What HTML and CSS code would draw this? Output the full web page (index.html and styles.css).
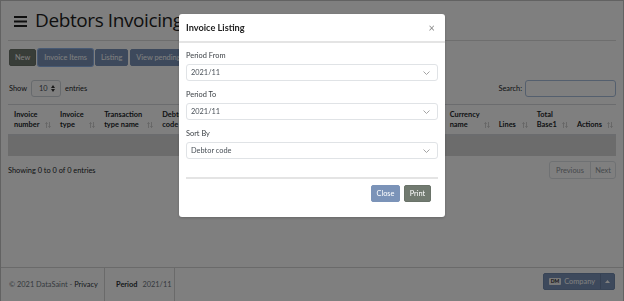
FILE: index.html
```html
<!DOCTYPE html>
<html lang="en">
<head>
<meta charset="utf-8">
<title>Debtors Invoicing</title>
<link rel="stylesheet" href="styles.css">
</head>
<body>
<div class="page">
  <main class="main">
    <div class="page-head">
      <svg class="burger" width="13" height="11" viewBox="0 0 13 11" aria-hidden="true"><rect x="0" y="0" width="13" height="2"/><rect x="0" y="4.5" width="13" height="2"/><rect x="0" y="9" width="13" height="2"/></svg>
      <h1 class="title">Debtors Invoicing</h1>
    </div>
    <div class="toolbar">
      <button class="btn btn-gray">New</button>
      <button class="btn btn-blue btn-focus">Invoice Items</button>
      <button class="btn btn-blue">Listing</button>
      <button class="btn btn-blue">View pending</button>
    </div>
    <div class="dt-top">
      <div class="dt-length">Show <span class="mini-select"><span>10</span><svg width="4" height="7" viewBox="0 0 4 7"><path d="M0 3 L2 0 L4 3Z M0 4 L2 7 L4 4Z" fill="#333"/></svg></span> entries</div>
      <div class="dt-search">Search: <span class="search-box"></span></div>
    </div>
    <table class="grid">
      <colgroup>
        <col class="w46"><col class="w44"><col class="w58"><col class="w80"><col class="w80b"><col class="w60"><col class="w67"><col class="w49"><col class="w38"><col class="w40"><col class="w45">
      </colgroup>
      <thead>
        <tr>
          <th>Invoice<br>number<svg class="sort" width="6" height="6" viewBox="0 0 6 6"><path d="M1.5 6V0.6M0.3 1.8L1.5 0.5L2.7 1.8M4.5 0V5.4M3.3 4.2L4.5 5.5L5.7 4.2" fill="none" stroke="#c4c4c4" stroke-width="0.8"/></svg></th>
          <th>Invoice<br>type<svg class="sort" width="6" height="6" viewBox="0 0 6 6"><path d="M1.5 6V0.6M0.3 1.8L1.5 0.5L2.7 1.8M4.5 0V5.4M3.3 4.2L4.5 5.5L5.7 4.2" fill="none" stroke="#c4c4c4" stroke-width="0.8"/></svg></th>
          <th>Transaction<br>type name<svg class="sort" width="6" height="6" viewBox="0 0 6 6"><path d="M1.5 6V0.6M0.3 1.8L1.5 0.5L2.7 1.8M4.5 0V5.4M3.3 4.2L4.5 5.5L5.7 4.2" fill="none" stroke="#c4c4c4" stroke-width="0.8"/></svg></th>
          <th>Debtor<br>code<svg class="sort" width="6" height="6" viewBox="0 0 6 6"><path d="M1.5 6V0.6M0.3 1.8L1.5 0.5L2.7 1.8M4.5 0V5.4M3.3 4.2L4.5 5.5L5.7 4.2" fill="none" stroke="#c4c4c4" stroke-width="0.8"/></svg></th>
          <th>Debtor<br>name<svg class="sort" width="6" height="6" viewBox="0 0 6 6"><path d="M1.5 6V0.6M0.3 1.8L1.5 0.5L2.7 1.8M4.5 0V5.4M3.3 4.2L4.5 5.5L5.7 4.2" fill="none" stroke="#c4c4c4" stroke-width="0.8"/></svg></th>
          <th>Invoice<br>date<svg class="sort" width="6" height="6" viewBox="0 0 6 6"><path d="M1.5 6V0.6M0.3 1.8L1.5 0.5L2.7 1.8M4.5 0V5.4M3.3 4.2L4.5 5.5L5.7 4.2" fill="none" stroke="#c4c4c4" stroke-width="0.8"/></svg></th>
          <th>Total<br>amount<svg class="sort" width="6" height="6" viewBox="0 0 6 6"><path d="M1.5 6V0.6M0.3 1.8L1.5 0.5L2.7 1.8M4.5 0V5.4M3.3 4.2L4.5 5.5L5.7 4.2" fill="none" stroke="#c4c4c4" stroke-width="0.8"/></svg></th>
          <th>Currency<br>name<svg class="sort" width="6" height="6" viewBox="0 0 6 6"><path d="M1.5 6V0.6M0.3 1.8L1.5 0.5L2.7 1.8M4.5 0V5.4M3.3 4.2L4.5 5.5L5.7 4.2" fill="none" stroke="#c4c4c4" stroke-width="0.8"/></svg></th>
          <th>Lines<svg class="sort" width="6" height="6" viewBox="0 0 6 6"><path d="M1.5 6V0.6M0.3 1.8L1.5 0.5L2.7 1.8M4.5 0V5.4M3.3 4.2L4.5 5.5L5.7 4.2" fill="none" stroke="#c4c4c4" stroke-width="0.8"/></svg></th>
          <th>Total<br>Base1<svg class="sort" width="6" height="6" viewBox="0 0 6 6"><path d="M1.5 6V0.6M0.3 1.8L1.5 0.5L2.7 1.8M4.5 0V5.4M3.3 4.2L4.5 5.5L5.7 4.2" fill="none" stroke="#c4c4c4" stroke-width="0.8"/></svg></th>
          <th>Actions<svg class="sort" width="6" height="6" viewBox="0 0 6 6"><path d="M1.5 6V0.6M0.3 1.8L1.5 0.5L2.7 1.8M4.5 0V5.4M3.3 4.2L4.5 5.5L5.7 4.2" fill="none" stroke="#c4c4c4" stroke-width="0.8"/></svg></th>
        </tr>
      </thead>
      <tbody>
        <tr class="empty"><td colspan="11"></td></tr>
      </tbody>
    </table>
    <div class="dt-bottom">
      <div class="dt-info">Showing 0 to 0 of 0 entries</div>
      <div class="pager"><span class="pg prev">Previous</span><span class="pg next">Next</span></div>
    </div>
  </main>
  <footer class="foot">
    <div class="foot-cell copy">© 2021 DataSaint -&nbsp;<a class="priv">Privacy</a></div>
    <div class="foot-cell period"><b>Period</b> <span class="pval">2021/11</span></div>
    <div class="company">
      <span class="company-main"><span class="dm">DM</span>Company</span>
      <span class="company-caret"><svg width="5" height="3" viewBox="0 0 5 3"><path d="M0 3 L2.5 0 L5 3Z" fill="#fff"/></svg></span>
    </div>
  </footer>
</div>

<div class="backdrop"></div>
<div class="modal-wrap">
  <div class="modal">
    <div class="modal-head">
      <h2 class="modal-title">Invoice Listing</h2>
      <span class="modal-x">×</span>
    </div>
    <div class="modal-body">
      <div class="field">
        <label class="lbl">Period From</label>
        <div class="sel"><span>2021/11</span><svg width="7" height="4" viewBox="0 0 7 4"><path d="M0.5 0.5 L3.5 3.5 L6.5 0.5" fill="none" stroke="#9a9a9a" stroke-width="0.9"/></svg></div>
      </div>
      <div class="field">
        <label class="lbl">Period To</label>
        <div class="sel"><span>2021/11</span><svg width="7" height="4" viewBox="0 0 7 4"><path d="M0.5 0.5 L3.5 3.5 L6.5 0.5" fill="none" stroke="#9a9a9a" stroke-width="0.9"/></svg></div>
      </div>
      <div class="field">
        <label class="lbl">Sort By</label>
        <div class="sel"><span>Debtor code</span><svg width="7" height="4" viewBox="0 0 7 4"><path d="M0.5 0.5 L3.5 3.5 L6.5 0.5" fill="none" stroke="#9a9a9a" stroke-width="0.9"/></svg></div>
      </div>
      <div class="rule"></div>
    </div>
    <div class="modal-foot">
      <button class="btn btn-blue mbtn-close">Close</button>
      <button class="btn btn-gray mbtn-print">Print</button>
    </div>
  </div>
</div>
</body>
</html>
```
FILE: styles.css
```css
* { box-sizing: border-box; }
html, body { margin: 0; padding: 0; height: 100%; }
body {
  font-family: "Lato", "Open Sans", sans-serif;
  font-size: 7.4px;
  color: #212529;
  background: #fff;
  overflow: hidden;
}

.page {
  height: 301px;
  display: flex;
  flex-direction: column;
  border: 1px solid #c4c4c4;
  border-bottom: 0;
}
.main { flex: 1; padding: 0 7px; }

.page-head {
  display: flex;
  align-items: center;
  height: 40px;
  padding-left: 6px;
  border-bottom: 1px solid #dcdcdc;
}
.burger { fill: #1e1e1e; margin-top: 2px; }
.title {
  margin: 0 0 0 8px;
  font-family: "Open Sans", sans-serif;
  font-size: 19px;
  font-weight: 500;
  line-height: 1;
  color: #1e1e1e;
  letter-spacing: -0.4px;
}

.toolbar { display: flex; gap: 2px; margin-top: 8px; padding-left: 1px; }
.btn {
  height: 17px;
  padding: 0 5px;
  font-family: inherit;
  font-size: 7.4px;
  line-height: 15px;
  color: #fff;
  border-radius: 2px;
  border: 1px solid transparent;
  cursor: pointer;
  white-space: nowrap;
}
.btn-gray { background: #717a70; border-color: #6a7369; }
.btn-blue { background: #7b93b8; border-color: #7b93b8; }
.btn-focus { box-shadow: 0 0 0 1px #8fb2e6; }

.dt-top {
  display: flex;
  justify-content: space-between;
  align-items: center;
  margin-top: 14px;
  height: 17px;
}
.dt-length { display: flex; align-items: center; gap: 4px; padding-left: 1px; }
.mini-select {
  display: inline-flex;
  align-items: center;
  justify-content: space-between;
  width: 30px;
  height: 17px;
  padding: 0 5px 0 7px;
  border: 1px solid #ced4da;
  border-radius: 3px;
  color: #495057;
}
.dt-search { display: flex; align-items: center; gap: 3px; }
.search-box {
  display: block;
  width: 91px;
  height: 17px;
  border: 1px solid #a9bedc;
  border-radius: 3px;
}

.grid {
  width: 100%;
  margin-top: 7px;
  border-collapse: collapse;
  table-layout: fixed;
}
.w46 { width: 46px; } .w44 { width: 44px; } .w58 { width: 58px; } .w80 { width: 80px; }
.w80b { width: 80px; } .w60 { width: 60px; } .w67 { width: 67px; }
.w49 { width: 49px; } .w38 { width: 38px; } .w40 { width: 40px; } .w45 { width: 45px; }
.grid th {
  position: relative;
  text-align: left;
  vertical-align: bottom;
  font-weight: 700;
  line-height: 10px;
  padding: 5px 6px 4px 6px;
  border-top: 1px solid #d6d9dc;
  border-bottom: 2px solid #d6d9dc;
  white-space: nowrap;
  overflow: hidden;
}
.sort {
  position: absolute;
  right: 3px;
  bottom: 6px;
}
.empty td { height: 21px; background: #d9d9d9; border-top: 1px solid #d6d9dc; }

.dt-bottom {
  display: flex;
  justify-content: space-between;
  align-items: center;
  margin-top: 5px;
}
.pager {
  display: flex;
  height: 18px;
  border: 1px solid #dee2e6;
  border-radius: 3px;
  color: #8d9297;
}
.pg { display: flex; align-items: center; justify-content: center; }
.prev { width: 41px; border-right: 1px solid #dee2e6; }
.next { width: 24px; }

.foot {
  height: 34px;
  display: flex;
  border-top: 1px solid #d4d4d4;
  color: #6c757d;
}
.foot-cell { display: flex; align-items: center; border-right: 1px solid #d4d4d4; white-space: nowrap; }
.copy { width: 104px; padding-left: 8px; }
.priv { color: #2d3338; }
.period { width: 70px; padding-left: 11px; gap: 5px; }
.period b { color: #2d3338; font-weight: 700; }
.company {
  display: flex;
  align-self: flex-start;
  margin: 5px 8px 0 auto;
  height: 17px;
  background: #7b93b8;
  border: 1px solid #7088ad;
  border-radius: 2px;
  color: #fff;
}
.company-main { display: flex; align-items: center; padding: 0 5px; gap: 3px; border-right: 1px solid #6a80a4; }
.dm {
  display: inline-block;
  background: #f1f1f1;
  color: #222;
  font-size: 5px;
  font-weight: 700;
  line-height: 7px;
  padding: 0 2px;
  border-radius: 1px;
}
.company-caret { display: flex; align-items: center; padding: 0 4px; }

.backdrop { position: fixed; inset: 0; background: rgba(0, 0, 0, 0.5); }
.modal-wrap {
  position: fixed;
  inset: 0;
  display: flex;
  justify-content: center;
  align-items: flex-start;
  padding-top: 14px;
}
.modal {
  width: 266px;
  background: #fff;
  border-radius: 3px;
  box-shadow: 0 1px 3px rgba(0, 0, 0, 0.2);
}
.modal-head {
  display: flex;
  align-items: center;
  justify-content: space-between;
  height: 29px;
  padding: 0 10px 0 7px;
  border-bottom: 2px solid #e4e4e4;
}
.modal-title { margin: 0; font-size: 9.2px; font-weight: 700; color: #222; }
.modal-x { font-size: 11px; color: #8a8a8a; line-height: 1; }
.modal-body { padding: 8px 7px 0 7px; }
.field { margin-bottom: 9px; }
.lbl { display: block; line-height: 10px; margin-bottom: 3px; color: #3a3f44; }
.sel {
  display: flex;
  align-items: center;
  justify-content: space-between;
  height: 17px;
  padding: 0 7px 0 4px;
  border: 1px solid #e0e3e6;
  border-radius: 3px;
  color: #495057;
}
.rule { height: 2px; background: #e4e4e4; margin-top: 18px; }
.modal-foot {
  display: flex;
  justify-content: flex-end;
  gap: 4px;
  padding: 6px 14px 15px 0;
}
.mbtn-close { width: 29px; padding: 0; }
.mbtn-print { width: 27px; padding: 0; }
```
